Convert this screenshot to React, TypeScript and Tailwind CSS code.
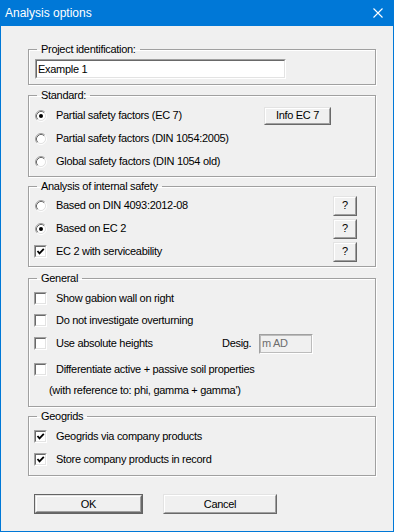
import type { ReactNode } from 'react'

function Radio({ checked }: { checked?: boolean }) {
  return (
    <svg width="12" height="12" viewBox="0 0 12 12" className="block">
      <circle cx="6" cy="6" r="4.2" fill="#fff" />
      <path d="M2.11 9.89 A5.5 5.5 0 0 1 9.89 2.11" fill="none" stroke="#a0a0a0" />
      <path d="M9.89 2.11 A5.5 5.5 0 0 1 2.11 9.89" fill="none" stroke="#fff" />
      <path d="M2.82 9.18 A4.5 4.5 0 0 1 9.18 2.82" fill="none" stroke="#696969" />
      <path d="M9.18 2.82 A4.5 4.5 0 0 1 2.82 9.18" fill="none" stroke="#e3e3e3" />
      {checked && <circle cx="6" cy="6" r="2" fill="#000" />}
    </svg>
  )
}

function Check({ checked }: { checked?: boolean }) {
  return (
    <div className="w-[13px] h-[13px] border border-t-[#a0a0a0] border-l-[#a0a0a0] border-b-white border-r-white">
      <div className="w-full h-full bg-white border border-t-[#696969] border-l-[#696969] border-b-[#e3e3e3] border-r-[#e3e3e3]">
        {checked && (
          <svg width="11" height="11" viewBox="0 0 11 11" className="block -mt-px -ml-px">
            <path d="M2.5 5 L4.5 7.3 L8.8 2.8" fill="none" stroke="#000" strokeWidth="1.8" />
          </svg>
        )}
      </div>
    </div>
  )
}

function Button({ children, className = '', isDefault }: { children: ReactNode; className?: string; isDefault?: boolean }) {
  const face = (
    <div className="h-full border border-t-[#e3e3e3] border-l-[#e3e3e3] border-b-[#696969] border-r-[#696969]">
      <div className="h-full flex items-center justify-center bg-[#f0f0f0] border border-t-white border-l-white border-b-[#a0a0a0] border-r-[#a0a0a0]">
        {children}
      </div>
    </div>
  )
  if (isDefault) {
    return <div className={`border border-[#646464] ${className}`}>{face}</div>
  }
  return <div className={className}>{face}</div>
}

function Group({ title, className = '', children }: { title: string; className?: string; children: ReactNode }) {
  return (
    <fieldset className={`ml-[27px] w-[348px] border border-[#a0a0a0] shadow-[1px_1px_0_#fff,inset_1px_1px_0_#fff] ${className}`}>
      <legend className="ml-[8px] px-[4px] leading-[14px]">{title}</legend>
      {children}
    </fieldset>
  )
}

function Row({ h, children }: { h: string; children: ReactNode }) {
  return <div className={`flex items-center pl-[5px] ${h}`}>{children}</div>
}

function Option({ radio, checked, label, className = '' }: { radio?: boolean; checked?: boolean; label: string; className?: string }) {
  return (
    <div className={`flex items-center ${className}`}>
      <div className="w-[13px] flex justify-center">{radio ? <Radio checked={checked} /> : <Check checked={checked} />}</div>
      <span className="ml-[9px]">{label}</span>
    </div>
  )
}

export default function App() {
  return (
    <div className="w-[394px] h-[532px] flex flex-col bg-[#0078d7] font-['Liberation_Sans',Arial,sans-serif] text-[11px] text-black">
      <div className="h-[26px] flex items-center justify-between pl-[5px] pr-[11px] text-white text-[12px]">
        <span>Analysis options</span>
        <svg width="10" height="10" viewBox="0 0 10 10">
          <path d="M0.5 0.5 L9.5 9.5 M9.5 0.5 L0.5 9.5" stroke="#fff" strokeWidth="1.1" />
        </svg>
      </div>
      <div className="flex-1 mx-px mb-px bg-[#f0f0f0] flex flex-col tracking-[-0.3px]">
        <Group title="Project identification:" className="mt-[16px] pt-[3px] pb-[5px]">
          <div className="ml-[6px] w-[251px] h-[20px] border border-t-[#a0a0a0] border-l-[#a0a0a0] border-b-white border-r-white">
            <div className="h-full bg-white border border-t-[#696969] border-l-[#696969] border-b-[#e3e3e3] border-r-[#e3e3e3] flex items-center pl-[1px]">
              Example 1
            </div>
          </div>
        </Group>

        <Group title="Standard:" className="mt-[3px] pt-[2px] pb-[3px]">
          <Row h="h-[23px]">
            <Option radio checked label="Partial safety factors (EC 7)" />
            <Button className="ml-auto mr-[44px] w-[67px] h-[18px]">Info EC 7</Button>
          </Row>
          <Row h="h-[23px]">
            <Option radio label="Partial safety factors (DIN 1054:2005)" />
          </Row>
          <Row h="h-[23px]">
            <Option radio label="Global safety factors (DIN 1054 old)" />
          </Row>
        </Group>

        <Group title="Analysis of internal safety" className="mt-[2px] pt-[1px] pb-[3px]">
          <Row h="h-[23px]">
            <Option radio label="Based on DIN 4093:2012-08" />
            <Button className="ml-auto mr-[18px] w-[24px] h-[20px]">?</Button>
          </Row>
          <Row h="h-[23px]">
            <Option radio checked label="Based on EC 2" />
            <Button className="ml-auto mr-[18px] w-[24px] h-[20px]">?</Button>
          </Row>
          <Row h="h-[23px]">
            <Option checked label="EC 2 with serviceability" />
            <Button className="ml-auto mr-[18px] w-[24px] h-[20px]">?</Button>
          </Row>
        </Group>

        <Group title="General" className="mt-[4px] pt-[2px] pb-[8px]">
          <Row h="h-[22px]">
            <Option label="Show gabion wall on right" />
          </Row>
          <Row h="h-[22px]">
            <Option label="Do not investigate overturning" />
          </Row>
          <Row h="h-[25px]">
            <Option label="Use absolute heights" className="w-[188px]" />
            <span className="w-[37px]">Desig.</span>
            <div className="w-[54px] h-[20px] border border-t-[#a0a0a0] border-l-[#a0a0a0] border-b-white border-r-white">
              <div className="h-full border border-[#bcbcbc] bg-[#f0f0f0] flex items-center pl-[1px] text-[#6d6d6d]">m AD</div>
            </div>
          </Row>
          <Row h="h-[26px]">
            <Option label="Differentiate active + passive soil properties" />
          </Row>
          <div className="h-[16px] flex items-center pl-[20px]">(with reference to: phi, gamma + gamma')</div>
        </Group>

        <Group title="Geogrids" className="mt-[2px] pt-[2px] pb-[4px]">
          <Row h="h-[23px]">
            <Option checked label="Geogrids via company products" />
          </Row>
          <Row h="h-[23px]">
            <Option checked label="Store company products in record" />
          </Row>
        </Group>

        <div className="mt-[18px] flex pl-[33px]">
          <Button isDefault className="w-[109px] h-[20px]">OK</Button>
          <Button className="ml-[20px] w-[114px] h-[20px]">Cancel</Button>
        </div>
      </div>
    </div>
  )
}
